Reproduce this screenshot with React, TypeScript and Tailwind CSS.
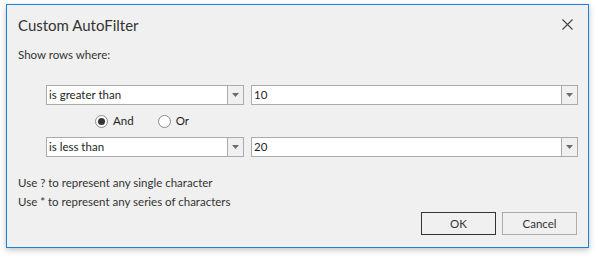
import React from "react";

const font = { fontFamily: '"Segoe UI", Lato, "Noto Sans", sans-serif' };

function Arrow() {
  return (
    <svg width="7" height="4" viewBox="0 0 7 4">
      <path d="M0 0 H7 L3.5 4 Z" fill="#6d6d6d" />
    </svg>
  );
}

function Combo({ text, width }: { text: string; width: string }) {
  return (
    <div className={`flex h-[20px] ${width} border border-[#ababab] bg-white`}>
      <div className="flex-1 pl-[2px] text-[11.5px] leading-[18px] text-[#1e1e1e]">{text}</div>
      <div className="flex w-[16px] items-center justify-center border-l border-[#ababab] bg-[#f0f0f0]">
        <Arrow />
      </div>
    </div>
  );
}

function Radio({ checked, label }: { checked: boolean; label: string }) {
  return (
    <div className="flex items-center gap-[5px]">
      <div className="flex h-[13px] w-[13px] items-center justify-center rounded-full border border-[#8a8a8a] bg-white">
        {checked && <div className="h-[7px] w-[7px] rounded-full bg-[#333]" />}
      </div>
      <span className="text-[11.5px] leading-[16px] text-[#1e1e1e]">{label}</span>
    </div>
  );
}

export default function App() {
  return (
    <div className="h-[257px] w-[596px] bg-white pl-[6px] pt-[4px]" style={font}>
      <div className="relative flex h-[244px] w-[583px] flex-col border border-[#1883d7] bg-[#f0f0f0] shadow-[0_2px_6px_rgba(0,0,0,0.25)]">
        <div className="flex h-[30px] items-end justify-between pl-[11px] pr-[15px]">
          <span className="text-[15px] leading-[20px] text-[#333]">Custom AutoFilter</span>
          <svg width="11" height="11" viewBox="0 0 11 11" className="mb-[5px]">
            <path d="M0.5 0.5 L10.5 10.5 M10.5 0.5 L0.5 10.5" stroke="#444" strokeWidth="1.1" />
          </svg>
        </div>
        <div className="mt-[12px] pl-[11px] text-[11.5px] leading-[16px] text-[#333]">Show rows where:</div>
        <div className="ml-[39px] mt-[22px] flex gap-[7px]">
          <Combo text="is greater than" width="w-[198px]" />
          <Combo text="10" width="w-[327px]" />
        </div>
        <div className="ml-[88px] mt-[8px] flex h-[16px] gap-[24px]">
          <Radio checked label="And" />
          <Radio checked={false} label="Or" />
        </div>
        <div className="ml-[39px] mt-[8px] flex gap-[7px]">
          <Combo text="is less than" width="w-[198px]" />
          <Combo text="20" width="w-[327px]" />
        </div>
        <div className="mt-[16px] pl-[11px] text-[11.5px] leading-[19px] text-[#333]">
          <div>Use ? to represent any single character</div>
          <div>Use * to represent any series of characters</div>
        </div>
        <div className="mt-[1px] flex justify-end gap-[6px] pr-[11px]">
          <button className="h-[23px] w-[75px] border border-[#333] bg-[#f0f0f0] text-[11.5px] text-[#333]">OK</button>
          <button className="h-[23px] w-[75px] border border-[#adadad] bg-[#f0f0f0] text-[11.5px] text-[#333]">Cancel</button>
        </div>
      </div>
    </div>
  );
}
